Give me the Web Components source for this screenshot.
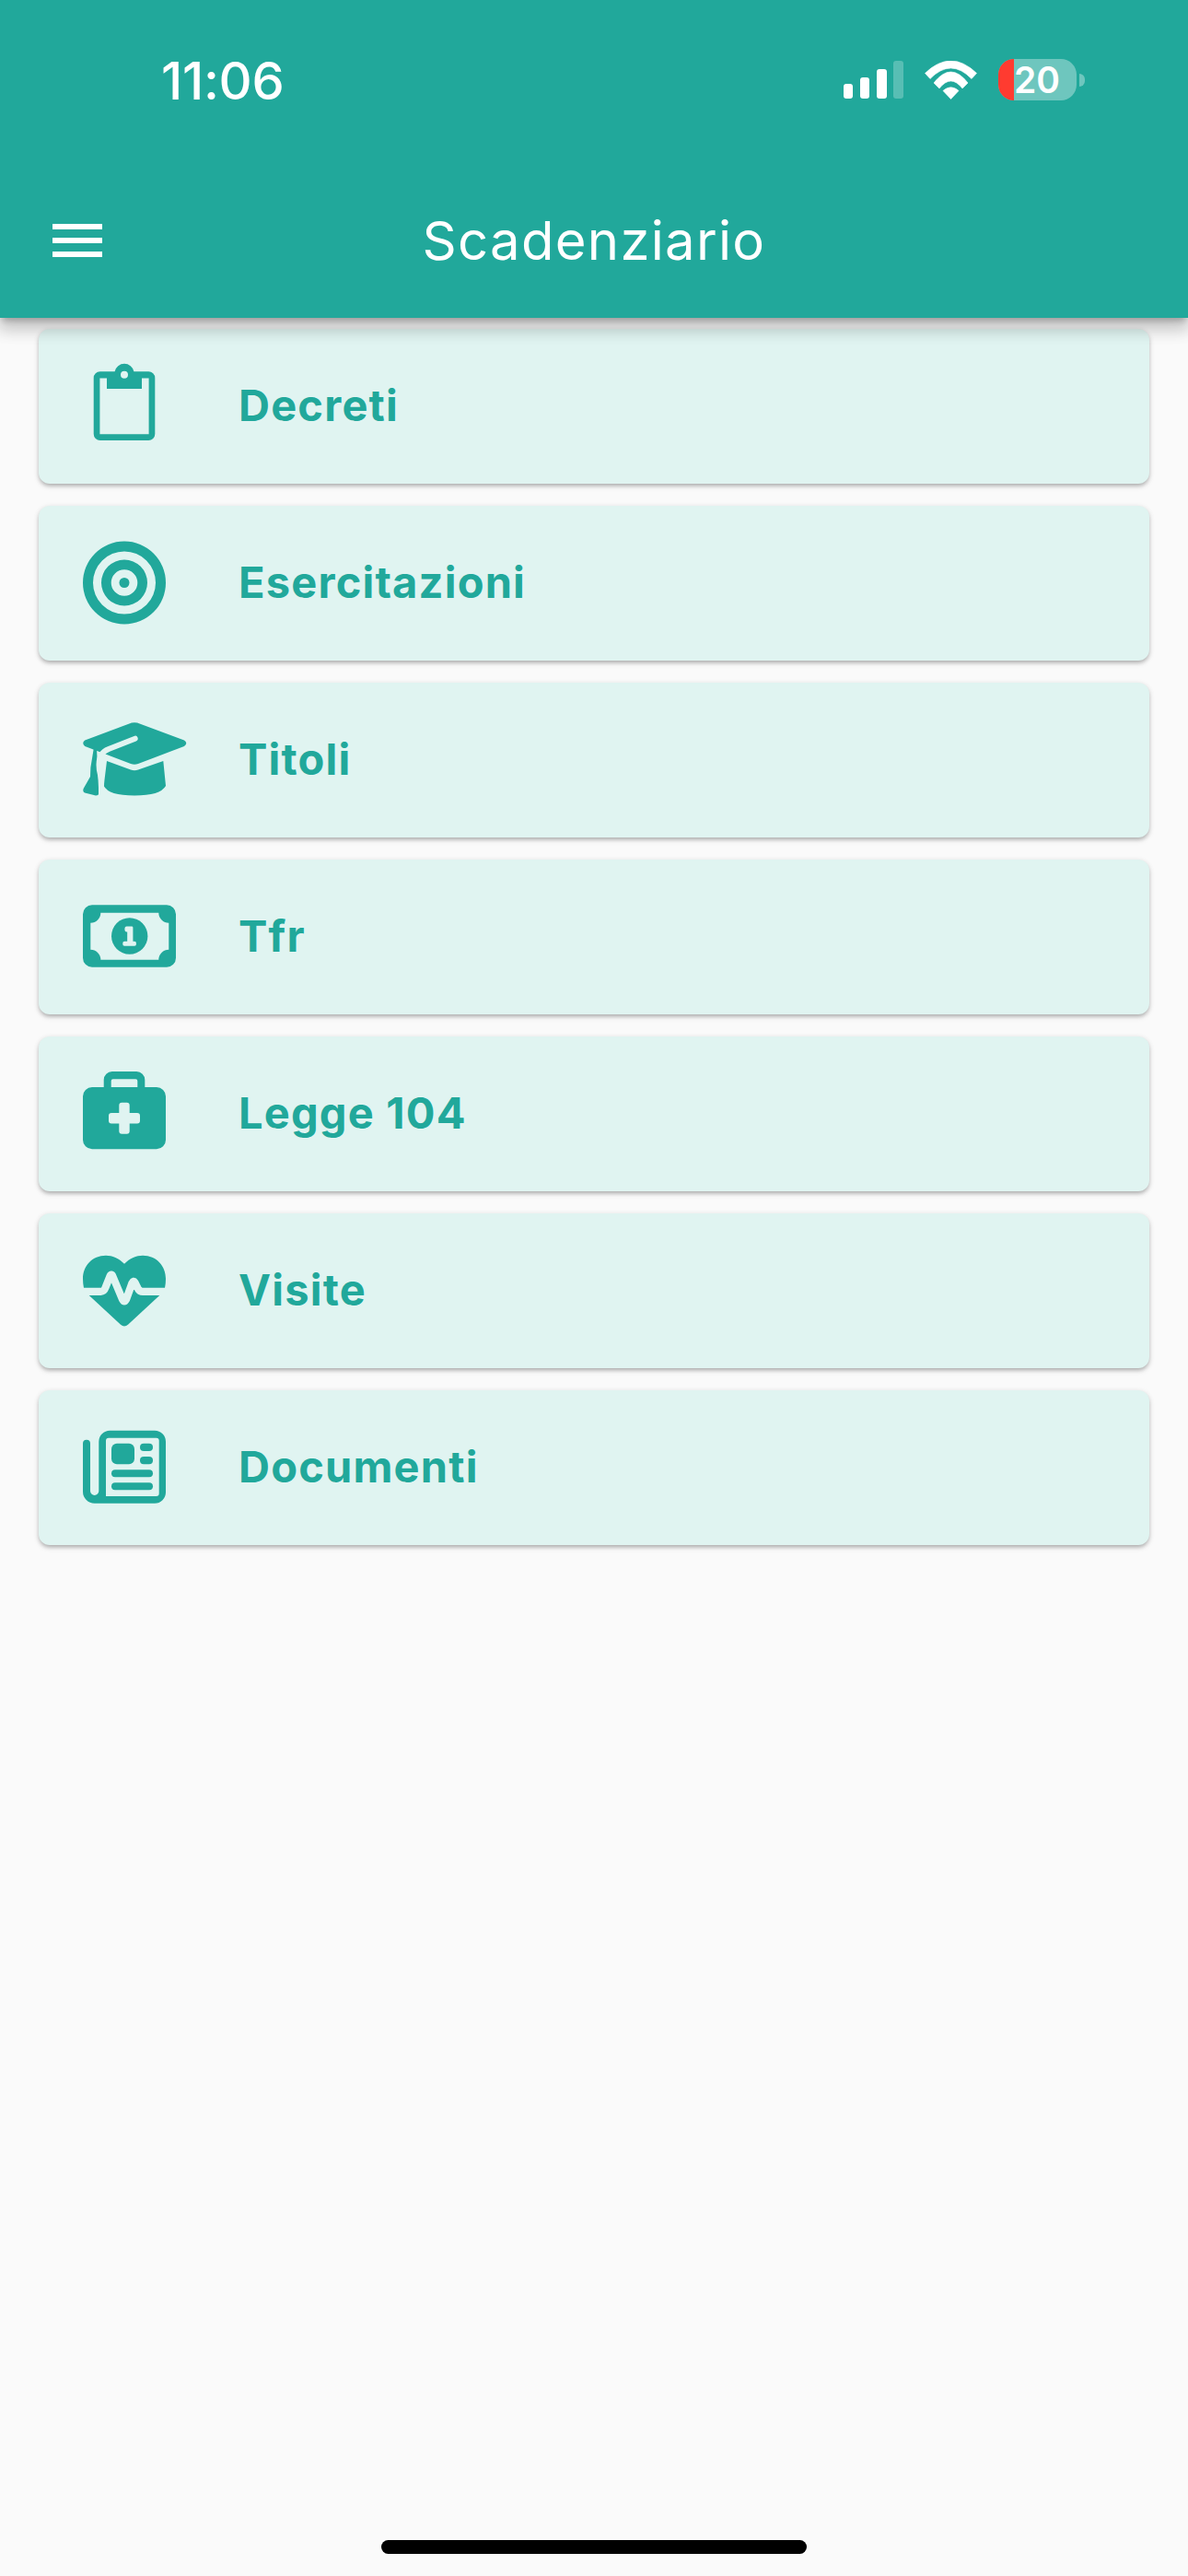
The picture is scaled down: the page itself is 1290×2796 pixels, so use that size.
<!DOCTYPE html>
<html lang="it">
<head>
<meta charset="utf-8">
<title>Scadenziario</title>
<style>
  html, body { margin: 0; padding: 0; background: #fafafa; }
</style>
</head>
<body>
<app-screen>
  <status-bar slot="top" time="11:06" battery="20"></status-bar>
  <app-bar slot="top">Scadenziario</app-bar>
  <menu-card icon="decreti">Decreti</menu-card>
  <menu-card icon="esercitazioni">Esercitazioni</menu-card>
  <menu-card icon="titoli">Titoli</menu-card>
  <menu-card icon="tfr">Tfr</menu-card>
  <menu-card icon="legge">Legge 104</menu-card>
  <menu-card icon="visite">Visite</menu-card>
  <menu-card icon="documenti">Documenti</menu-card>
</app-screen>

<script>
class AppScreen extends HTMLElement {
  constructor() {
    super();
    this.shadow = this.attachShadow({ mode: 'open' });
  }

  connectedCallback() {
    this.shadow.innerHTML = `
      <style>
        :host {
          display: flex;
          flex-direction: column;
          min-height: 2796px;
          background: #fafafa;
          font-family: Inter, "Liberation Sans", sans-serif;
        }

        header {
          position: relative;
          z-index: 2;
          background: #21a89b;
          box-shadow: 0 6px 6px -3px rgba(0, 0, 0, .2), 0 12px 15px 2px rgba(0, 0, 0, .14), 0 3px 24px 3px rgba(0, 0, 0, .12);
        }

        main {
          display: flex;
          flex-direction: column;
          gap: 24px;
          padding: 12px 42px;
        }

        .home {
          margin: auto auto 24px;
          width: 462px;
          height: 15px;
          border-radius: 8px;
          background: #000;
        }
      </style>

      <header><slot name="top"></slot></header>
      <main><slot></slot></main>
      <div class="home"></div>
    `;
  }
}

class StatusBar extends HTMLElement {
  constructor() {
    super();
    this.shadow = this.attachShadow({ mode: 'open' });
  }

  connectedCallback() {
    this.shadow.innerHTML = `
      <style>
        :host {
          display: flex;
          justify-content: space-between;
          align-items: center;
          box-sizing: border-box;
          height: 177px;
          padding: 64px 112px 68px 175px;
          color: #fff;
        }

        .time {
          margin-top: 3px;
          font-size: 56px;
          font-weight: 500;
          line-height: 45px;
          letter-spacing: -.3px;
        }

        .icons {
          display: flex;
          align-items: center;
          gap: 23px;
        }

        svg { display: block; }

        .battery {
          display: flex;
          align-items: center;
          gap: 3px;
        }

        .cell {
          display: flex;
          width: 85px;
          height: 45px;
          border-radius: 17px;
          overflow: hidden;
          background: rgba(255, 255, 255, .35);
        }

        .low {
          width: 17px;
          background: #ff3b30;
        }

        .level {
          font-size: 39px;
          font-weight: 600;
          line-height: 45px;
        }

        .nub {
          width: 6px;
          height: 14px;
          border-radius: 0 7px 7px 0;
          background: rgba(255, 255, 255, .35);
        }
      </style>

      <span class="time">${this.getAttribute('time')}</span>
      <div class="icons">
        <svg width="65" height="41" viewBox="0 0 65 41" fill="#fff">
          <rect x="0" y="25" width="10" height="16" rx="3"/>
          <rect x="18" y="18" width="10" height="23" rx="3"/>
          <rect x="36" y="9" width="11" height="32" rx="3"/>
          <rect x="54" y="0" width="11" height="41" rx="3" fill-opacity=".25"/>
        </svg>
        <svg width="57" height="42" viewBox="0 0 57 42" fill="#fff" stroke="#fff" stroke-width=".6" stroke-linejoin="round">
          <path d="M.5 13.5Q28.5-13.5 56.5 13.5L51 19.5Q28.5-3.5 6 19.5Z"/>
          <path d="M10 24Q28.5 0 47 24L41 30Q28.5 14 16 30Z"/>
          <path d="M20 32.5Q28.5 25 37 32.5L28.5 41.5Z"/>
        </svg>
        <div class="battery">
          <div class="cell">
            <div class="low"></div>
            <span class="level">${this.getAttribute('battery')}</span>
          </div>
          <div class="nub"></div>
        </div>
      </div>
    `;
  }
}

class AppBar extends HTMLElement {
  constructor() {
    super();
    this.shadow = this.attachShadow({ mode: 'open' });
  }

  connectedCallback() {
    this.shadow.innerHTML = `
      <style>
        :host {
          display: grid;
          grid-template-columns: 1fr auto 1fr;
          align-items: center;
          box-sizing: border-box;
          height: 168px;
          padding: 0 57px;
          color: #fff;
        }

        .menu {
          display: flex;
          flex-direction: column;
          gap: 9px;
          width: 54px;
        }

        .menu span {
          height: 6px;
          background: #fff;
        }

        .title {
          font-size: 58px;
          font-weight: 400;
          letter-spacing: 1.3px;
        }
      </style>

      <div class="menu"><span></span><span></span><span></span></div>
      <div class="title"><slot></slot></div>
      <div></div>
    `;
  }
}

// every glyph is drawn in a 112x90 box, left aligned in the icon column
const ICONOS = {
  decreti: `
    <path fill-rule="evenodd" d="M18.7 7.3H34.6a10.6 10.6 0 0 1 20.8 0H71.3a7 7 0 0 1 7 7V75a7 7 0 0 1-7 7H18.7a7 7 0 0 1-7-7V14.3a7 7 0 0 1 7-7ZM45 6.7a4 4 0 1 0 0 8 4 4 0 0 0 0-8ZM18.4 14.6V75.2H71.6V14.6H64V26H26V14.6Z"/>`,
  esercitazioni: `
    <path fill-rule="evenodd" d="M45-.5a45 45 0 1 0 0 90 45 45 0 0 0 0-90ZM45 10.5a34 34 0 1 1 0 68 34 34 0 0 1 0-68Z"/>
    <path fill-rule="evenodd" d="M45 19.5a25 25 0 1 0 0 50 25 25 0 0 0 0-50ZM45 30.2a14.3 14.3 0 1 1 0 28.6 14.3 14.3 0 0 1 0-28.6Z"/>
    <circle cx="45" cy="44.5" r="5.5"/>`,
  titoli: `
    <path d="M12 31 8.4 53 8 63 .6 76Q-.5 79 2 80.5L14 83.5Q17 83.5 17.3 81L16 55 15 32Z"/>
    <path d="M53 4.6Q56 3.8 59 4.6L110 23.5Q114.5 26.7 110 30L60 49Q56 50.3 52 49L2.2 30Q-1.8 26.7 2.2 23.5Z"/>
    <path d="M26 46 52 55.5Q56 57 60 55.5L87.3 46 90 73Q84 83.5 56 83.5 28 83.5 22.7 73Z"/>
    <path fill="none" stroke="var(--tinta)" stroke-width="6" stroke-linecap="round" d="M56.7 21.7 28 33Q17.5 37 17.5 50Q17.5 56 19 61Q20.5 66 20 74L20 85"/>`,
  tfr: `
    <path fill-rule="evenodd" d="M10 10.3H91a10 10 0 0 1 10 10V67.7a10 10 0 0 1-10 10H10a10 10 0 0 1-10-10V20.3a10 10 0 0 1 10-10ZM19.3 18.7A11 11 0 0 1 8.3 29.7V58.7A11 11 0 0 1 19.3 69.7H82.3A11 11 0 0 1 93.3 58.7V29.7A11 11 0 0 1 82.3 18.7Z"/>
    <circle cx="50.7" cy="44" r="19.7"/>
    <path fill="var(--tinta)" d="M47.5 33.4H53Q54.4 33.4 54.4 34.8V49.8H56Q58 49.8 58 52.2 58 54.8 56 54.8H45.2Q43.2 54.8 43.2 52.2 43.2 49.8 45.2 49.8H48.2V39.4H47.5Q45.4 39.4 45.4 36.4 45.4 33.4 47.5 33.4Z"/>`,
  legge: `
    <path fill-rule="evenodd" d="M10 16H22.7V8A9 9 0 0 1 31.7-1H58.3A9 9 0 0 1 67.3 8V16H80A10 10 0 0 1 90 26V73.3A10 10 0 0 1 80 83.3H10A10 10 0 0 1 0 73.3V26A10 10 0 0 1 10 16ZM30.7 16H59.3V9.3A2 2 0 0 0 57.3 7.3H32.7A2 2 0 0 0 30.7 9.3ZM42.3 32.7A3 3 0 0 0 39.3 35.7V44H31A3 3 0 0 0 28 47V52.4A3 3 0 0 0 31 55.4H39.3V63.7A3 3 0 0 0 42.3 66.7H47.7A3 3 0 0 0 50.7 63.7V55.4H59A3 3 0 0 0 62 52.4V47A3 3 0 0 0 59 44H50.7V35.7A3 3 0 0 0 47.7 32.7Z"/>`,
  visite: `
    <path d="M45 15.7C39 9.8 32 6.7 25 6.7 10 6.7 0 18 0 32Q0 37 1 42L6.7 50 41 81.8Q45 85 49 81.8L83.3 50 89 42Q90 37 90 32C90 18 80 6.7 65 6.7 58 6.7 51 9.8 45 15.7Z"/>
    <path fill="none" stroke="var(--tinta)" stroke-width="8.2" stroke-linejoin="round" stroke-linecap="round" d="M-3 45.8H19.5Q23 45.8 24.5 41.5L29.5 29Q31 26 32.5 29.5L43 54.5Q45 58.5 47 54.5L53.5 36.5Q55 33.5 56.5 36L60 43Q61.5 45.8 65 45.8H93"/>`,
  documenti: `
    <path fill-rule="evenodd" d="M0 18.7a4 4 0 0 1 8 0V70.3a4.6 4.6 0 0 0 9.3 0V16.7a12 12 0 0 1 12-12H78a12 12 0 0 1 12 12V71.7a12 12 0 0 1-12 12H12.7A12.7 12.7 0 0 1 0 71ZM28 12.7A3 3 0 0 0 25 15.7V76H79.7A3 3 0 0 0 82.7 73V15.7A3 3 0 0 0 79.7 12.7Z"/>
    <rect x="31" y="18.7" width="25" height="22.6" rx="6"/>
    <rect x="62" y="18.7" width="14" height="8.3" rx="4.1"/>
    <rect x="62" y="33" width="14" height="8.3" rx="4.1"/>
    <rect x="31" y="47.3" width="45" height="8" rx="4"/>
    <rect x="31" y="61.3" width="45" height="8" rx="4"/>`
};

class MenuCard extends HTMLElement {
  constructor() {
    super();
    this.shadow = this.attachShadow({ mode: 'open' });
  }

  connectedCallback() {
    this.shadow.innerHTML = `
      <style>
        :host {
          --tinta: #e0f4f1;
          display: flex;
          align-items: center;
          gap: 57px;
          box-sizing: border-box;
          height: 168px;
          padding-left: 48px;
          border-radius: 12px;
          background: var(--tinta);
          color: #21a89b;
          box-shadow: 0 3px 4px -1px rgba(0, 0, 0, .2), 0 3px 6px 0 rgba(0, 0, 0, .1), 0 1px 6px 0 rgba(0, 0, 0, .08);
        }

        svg {
          display: block;
          flex: none;
          overflow: visible;
          fill: currentColor;
        }

        .label {
          margin-bottom: 3px;
          font-size: 47px;
          font-weight: 700;
          letter-spacing: 1.2px;
        }
      </style>

      <svg width="112" height="90" viewBox="0 0 112 90">${ICONOS[this.getAttribute('icon')]}</svg>
      <div class="label"><slot></slot></div>
    `;
  }
}

customElements.define('app-screen', AppScreen);
customElements.define('status-bar', StatusBar);
customElements.define('app-bar', AppBar);
customElements.define('menu-card', MenuCard);
</script>
</body>
</html>
